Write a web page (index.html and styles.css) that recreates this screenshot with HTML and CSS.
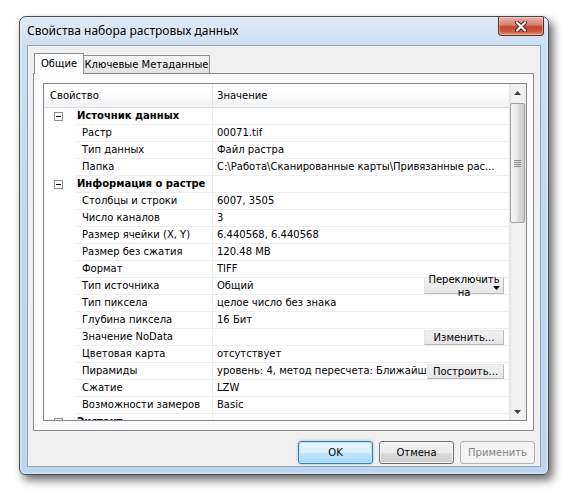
FILE: index.html
```html
<!DOCTYPE html>
<html lang="ru">
<head>
<meta charset="utf-8">
<title>Свойства набора растровых данных</title>
<link rel="stylesheet" href="styles.css">
</head>
<body>
<div class="window">
  <div class="titlebar">
    <span class="title">Свойства набора растровых данных</span>
    <div class="close">
      <svg width="12" height="11" viewBox="0 0 12 11"><path d="M2 1.5L10 9.5M10 1.5L2 9.5" stroke="#4a2019" stroke-width="4" stroke-linecap="round"/><path d="M2 1.5L10 9.5M10 1.5L2 9.5" stroke="#fff" stroke-width="2.2" stroke-linecap="round"/></svg>
    </div>
  </div>
  <div class="client">
    <div class="tabs">
      <div class="tab active">Общие</div>
      <div class="tab second">Ключевые Метаданные</div>
    </div>
    <div class="panel">
      <div class="list">
        <div class="grid">
          <div class="head"><div class="h1">Свойство</div><div class="h2">Значение</div></div>

          <div class="row group"><div class="c1"><div class="gut"><svg width="9" height="9" viewBox="0 0 9 9"><rect x="0.5" y="0.5" width="8" height="8" fill="#fff" stroke="#8f8f8f"/><path d="M2 4.5H7" stroke="#000"/></svg></div><div class="lbl">Источник данных</div></div><div class="c2"></div></div>
          <div class="row"><div class="c1"><div class="gut"></div><div class="lbl">Растр</div></div><div class="c2"><span class="val">00071.tif</span></div></div>
          <div class="row"><div class="c1"><div class="gut"></div><div class="lbl">Тип данных</div></div><div class="c2"><span class="val">Файл растра</span></div></div>
          <div class="row"><div class="c1"><div class="gut"></div><div class="lbl">Папка</div></div><div class="c2"><span class="val">C:\Работа\Сканированные карты\Привязанные рас...</span></div></div>

          <div class="row group"><div class="c1"><div class="gut"><svg width="9" height="9" viewBox="0 0 9 9"><rect x="0.5" y="0.5" width="8" height="8" fill="#fff" stroke="#8f8f8f"/><path d="M2 4.5H7" stroke="#000"/></svg></div><div class="lbl">Информация о растре</div></div><div class="c2"></div></div>
          <div class="row"><div class="c1"><div class="gut"></div><div class="lbl">Столбцы и строки</div></div><div class="c2"><span class="val">6007, 3505</span></div></div>
          <div class="row"><div class="c1"><div class="gut"></div><div class="lbl">Число каналов</div></div><div class="c2"><span class="val">3</span></div></div>
          <div class="row"><div class="c1"><div class="gut"></div><div class="lbl">Размер ячейки (X, Y)</div></div><div class="c2"><span class="val">6.440568, 6.440568</span></div></div>
          <div class="row"><div class="c1"><div class="gut"></div><div class="lbl">Размер без сжатия</div></div><div class="c2"><span class="val">120.48 MB</span></div></div>
          <div class="row"><div class="c1"><div class="gut"></div><div class="lbl">Формат</div></div><div class="c2"><span class="val">TIFF</span></div></div>
          <div class="row"><div class="c1"><div class="gut"></div><div class="lbl">Тип источника</div></div><div class="c2"><span class="val">Общий</span><span class="cellbtn tall">Переключить<br>на<svg class="drop" width="7" height="4" viewBox="0 0 7 4"><path d="M0 0H7L3.5 4Z" fill="#000"/></svg></span></div></div>
          <div class="row"><div class="c1"><div class="gut"></div><div class="lbl">Тип пиксела</div></div><div class="c2"><span class="val">целое число без знака</span></div></div>
          <div class="row"><div class="c1"><div class="gut"></div><div class="lbl">Глубина пиксела</div></div><div class="c2"><span class="val">16 Бит</span></div></div>
          <div class="row"><div class="c1"><div class="gut"></div><div class="lbl">Значение NoData</div></div><div class="c2"><span class="val"></span><span class="cellbtn">Изменить...</span></div></div>
          <div class="row"><div class="c1"><div class="gut"></div><div class="lbl">Цветовая карта</div></div><div class="c2"><span class="val">отсутствует</span></div></div>
          <div class="row"><div class="c1"><div class="gut"></div><div class="lbl">Пирамиды</div></div><div class="c2"><span class="val">уровень: 4, метод пересчета: Ближайший сосед</span><span class="cellbtn narrow">Построить...</span></div></div>
          <div class="row"><div class="c1"><div class="gut"></div><div class="lbl">Сжатие</div></div><div class="c2"><span class="val">LZW</span></div></div>
          <div class="row"><div class="c1"><div class="gut"></div><div class="lbl">Возможности замеров</div></div><div class="c2"><span class="val">Basic</span></div></div>

          <div class="row group"><div class="c1"><div class="gut"><svg width="9" height="9" viewBox="0 0 9 9"><rect x="0.5" y="0.5" width="8" height="8" fill="#fff" stroke="#8f8f8f"/><path d="M2 4.5H7" stroke="#000"/></svg></div><div class="lbl">Экстент</div></div><div class="c2"></div></div>
        </div>
        <div class="scroll">
          <div class="sbtn"><svg width="7" height="4" viewBox="0 0 7 4"><path d="M0 4L3.5 0L7 4Z" fill="#3d3d3d"/></svg></div>
          <div class="thumb"><svg width="7" height="7" viewBox="0 0 7 7"><path d="M0 0.5H7M0 2.5H7M0 4.5H7M0 6.5H7" stroke="#8a8a8a"/></svg></div>
          <div class="track"></div>
          <div class="sbtn"><svg width="7" height="4" viewBox="0 0 7 4"><path d="M0 0L3.5 4L7 0Z" fill="#3d3d3d"/></svg></div>
        </div>
      </div>
    </div>
    <div class="buttons">
      <div class="btn default">OK</div>
      <div class="btn">Отмена</div>
      <div class="btn disabled">Применить</div>
    </div>
  </div>
</div>
</body>
</html>
```
FILE: styles.css
```css
* { box-sizing: border-box; }
html, body { margin: 0; padding: 0; }
body {
  background: #fff;
  width: 573px;
  height: 495px;
  overflow: hidden;
  font-family: "DejaVu Sans", sans-serif;
  font-size: 10px;
  color: #000;
}
.window {
  margin: 16px 0 0 19px;
  width: 530px;
  height: 459px;
  border: 1px solid #3f4853;
  border-radius: 7px 7px 6px 6px;
  background: linear-gradient(180deg, #dce9f7 0%, #cfe0f3 6%, #c2d8ef 40%, #bed5ed 100%);
  box-shadow: 4px 5px 10px rgba(0, 0, 0, 0.6), inset 0 0 0 1px rgba(255, 255, 255, 0.55);
  display: flex;
  flex-direction: column;
  padding: 0 7px 7px 7px;
}
.titlebar {
  height: 28px;
  display: flex;
  align-items: center;
  flex: none;
}
.title {
  font-family: "Noto Sans", sans-serif;
  font-size: 12px;
  color: #000;
  text-shadow: 0 0 6px rgba(255, 255, 255, 0.95);
  margin-top: -1px;
}
.close {
  margin-left: auto;
  margin-right: -3px;
  align-self: flex-start;
  width: 46px;
  height: 19px;
  border: 1px solid #5a2c26;
  border-top: none;
  border-radius: 0 0 4px 4px;
  background: linear-gradient(180deg, #eab0a4 0%, #d88472 42%, #c2442d 55%, #d05a40 82%, #e6a07f 100%);
  box-shadow: inset 0 0 0 1px rgba(255, 255, 255, 0.35);
  display: flex;
  align-items: center;
  justify-content: center;
}
.client {
  flex: 1;
  border: 1px solid #8ea3bc;
  background: #f0f0f0;
  display: flex;
  flex-direction: column;
  padding: 7px 6px 0 5px;
}
.tabs {
  display: flex;
  align-items: flex-end;
  height: 21px;
  margin-bottom: -1px;
  padding-left: 1px;
  flex: none;
}
.tab {
  height: 19px;
  border: 1px solid #898c95;
  background: linear-gradient(180deg, #f4f4f4 0%, #ececec 50%, #e2e2e2 100%);
  display: flex;
  align-items: center;
  justify-content: center;
  white-space: nowrap;
}
.tab.active {
  width: 50px;
  height: 21px;
  background: #fcfcfc;
  border-bottom: none;
  position: relative;
  z-index: 1;
  padding-bottom: 1px;
}
.tab.second {
  width: 127px;
  margin-left: -1px;
}
.panel {
  height: 358px;
  flex: none;
  border: 1px solid #898c95;
  background: #fcfcfc;
  padding: 9px 6px 9px 9px;
  display: flex;
}
.list {
  flex: 1;
  border: 1px solid #828790;
  background: #fff;
  display: flex;
  overflow: hidden;
}
.grid {
  flex: 1;
  min-width: 0;
  overflow: hidden;
}
.head {
  height: 24px;
  display: flex;
  background: linear-gradient(180deg, #ffffff 0%, #ffffff 35%, #f1f2f4 100%);
  border-bottom: 1px solid #d8dadd;
}
.h1 {
  width: 168px;
  flex: none;
  padding-left: 6px;
  display: flex;
  align-items: center;
}
.h2 {
  flex: 1;
  border-left: 1px solid #e1e4e8;
  padding-left: 4px;
  display: flex;
  align-items: center;
}
.row {
  display: flex;
  height: 17px;
}
.c1 {
  width: 168px;
  flex: none;
  display: flex;
}
.gut {
  width: 31px;
  flex: none;
  display: flex;
  align-items: center;
  padding-left: 10px;
}
.lbl {
  flex: 1;
  border-bottom: 1px solid #efefef;
  padding-left: 7px;
  line-height: 16px;
  white-space: nowrap;
  overflow: hidden;
}
.group .lbl {
  font-weight: bold;
  padding-left: 2px;
}
.c2 {
  flex: 1;
  min-width: 0;
  border-left: 1px solid #efefef;
  border-bottom: 1px solid #efefef;
  padding-left: 4px;
  display: flex;
  align-items: center;
}
.val {
  flex: 1;
  min-width: 0;
  white-space: nowrap;
  overflow: hidden;
  line-height: 16px;
}
.cellbtn {
  flex: none;
  width: 80px;
  height: 15px;
  margin-right: 5px;
  background: linear-gradient(180deg, #f1f1f1 0%, #e6e6e6 100%);
  border: 1px solid #e6e6e6;
  border-right-color: #b9b9b9;
  border-bottom-color: #b9b9b9;
  display: flex;
  align-items: center;
  justify-content: center;
  white-space: nowrap;
  line-height: 13px;
}
.cellbtn.narrow {
  width: 77px;
}
.cellbtn.tall {
  height: 17px;
  text-align: center;
  position: relative;
  overflow: visible;
  align-self: flex-start;
  margin-top: -1px;
}
.drop {
  position: absolute;
  right: 3px;
  top: 8px;
}
.scroll {
  width: 17px;
  flex: none;
  display: flex;
  flex-direction: column;
  align-items: center;
  background: linear-gradient(90deg, #e4e4e4 0%, #f2f2f2 25%, #f2f2f2 75%, #eaeaea 100%);
}
.sbtn {
  width: 17px;
  height: 17px;
  flex: none;
  display: flex;
  align-items: center;
  justify-content: center;
}
.thumb {
  margin-top: 2px;
  width: 15px;
  height: 120px;
  flex: none;
  border: 1px solid #a0a0a0;
  border-radius: 2px;
  background: linear-gradient(90deg, #f5f5f5 0%, #ebebeb 45%, #dadada 55%, #cfcfcf 100%);
  display: flex;
  align-items: center;
  justify-content: center;
}
.track {
  flex: 1;
}
.buttons {
  display: flex;
  justify-content: flex-end;
  gap: 6px;
  margin-top: 10px;
  margin-right: -1px;
}
.btn {
  width: 75px;
  height: 23px;
  border: 1px solid #707070;
  border-radius: 3px;
  background: linear-gradient(180deg, #f2f2f2 0%, #ebebeb 50%, #dddddd 51%, #cfcfcf 100%);
  box-shadow: inset 0 0 0 1px rgba(255, 255, 255, 0.7);
  display: flex;
  align-items: center;
  justify-content: center;
}
.btn.default {
  border-color: #3c7fb1;
  background: linear-gradient(180deg, #eaf6fd 0%, #d9f0fc 50%, #bee6fd 51%, #a7d9f5 100%);
  box-shadow: inset 0 0 0 1px #b9e2f7, 0 0 3px rgba(80, 160, 220, 0.6);
}
.btn.disabled {
  border-color: #adb2b5;
  background: #f4f4f4;
  color: #838383;
  box-shadow: none;
}
```
